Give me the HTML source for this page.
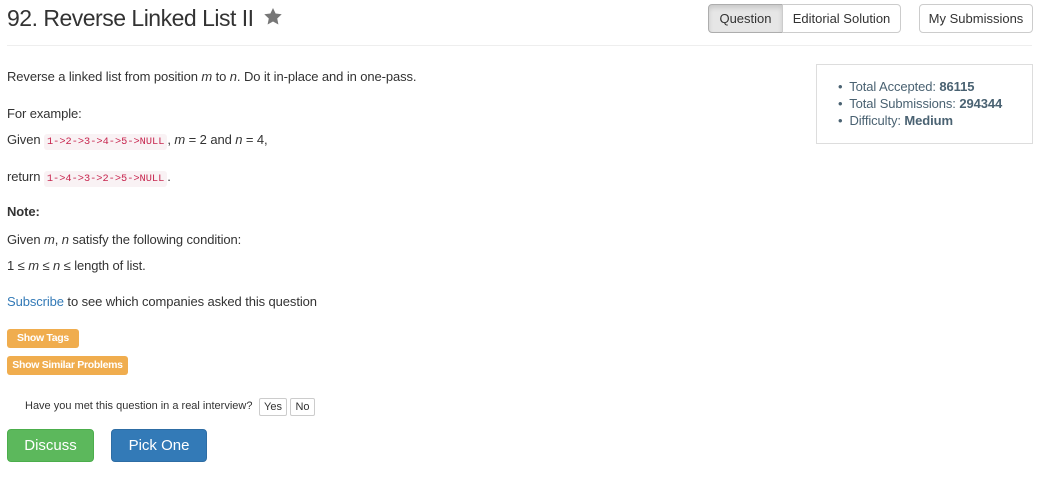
<!DOCTYPE html>
<html><head><meta charset="utf-8"><style>
body{margin:0;width:1057px;height:477px;background:#fff;font-family:"Liberation Sans",sans-serif;color:#333;position:relative;overflow:hidden}
.a{position:absolute;white-space:nowrap}
.t{font-size:13px;line-height:16px;letter-spacing:-0.1px}
code{font-family:"Liberation Mono",monospace;font-size:10.3px;letter-spacing:0;color:#c7254e;background:#f9f2f4;padding:2px 3px;border-radius:3px}
.btn{position:absolute;box-sizing:border-box;border:1px solid #ccc;border-radius:4px;background:#fff;font-size:13px;text-align:center;color:#333}
.or{position:absolute;background:#f0ad4e;color:#fff;font-weight:bold;font-size:10.5px;border-radius:3px;text-align:center;line-height:19px;letter-spacing:-0.3px}
</style></head><body>
<div class="a" style="left:7px;top:3px;font-size:23px;line-height:30px;letter-spacing:-0.5px;color:#333">92. Reverse Linked List II</div>
<svg class="a" style="left:264px;top:8px" width="18" height="17" viewBox="0 0 24 23"><path d="M12 0l3.5 7.5 8.3 1-6.1 5.7 1.6 8.2L12 18.3 4.7 22.4l1.6-8.2L.2 8.5l8.3-1z" fill="#777"/></svg>
<div class="btn" style="left:708px;top:4px;width:75px;height:29px;line-height:27px;background:#e6e6e6;border-color:#adadad;border-radius:4px 0 0 4px;box-shadow:inset 0 3px 5px rgba(0,0,0,.125)">Question</div>
<div class="btn" style="left:782px;top:4px;width:119px;height:29px;line-height:27px;border-radius:0 4px 4px 0">Editorial Solution</div>
<div class="btn" style="left:919px;top:4px;width:114px;height:29px;line-height:27px">My Submissions</div>
<div class="a" style="left:7px;top:45px;width:1025px;height:1px;background:#eee"></div>
<div class="a t" style="left:7px;top:69px">Reverse a linked list from position <i>m</i> to <i>n</i>. Do it in-place and in one-pass.</div>
<div class="a t" style="left:7px;top:106px">For example:</div>
<div class="a t" style="left:7px;top:132px">Given <code>1-&gt;2-&gt;3-&gt;4-&gt;5-&gt;NULL</code>, <i>m</i> = 2 and <i>n</i> = 4,</div>
<div class="a t" style="left:7px;top:169px">return <code>1-&gt;4-&gt;3-&gt;2-&gt;5-&gt;NULL</code>.</div>
<div class="a t" style="left:7px;top:204px;font-weight:bold">Note:</div>
<div class="a t" style="left:7px;top:232px">Given <i>m</i>, <i>n</i> satisfy the following condition:</div>
<div class="a t" style="left:7px;top:258px">1 ≤ <i>m</i> ≤ <i>n</i> ≤ length of list.</div>
<div class="a t" style="left:7px;top:294px"><span style="color:#337ab7">Subscribe</span> to see which companies asked this question</div>
<div class="a" style="left:816px;top:64px;width:215px;height:78px;border:1px solid #ddd"></div>
<div class="a t" style="left:838px;top:78px;color:#4a6272;line-height:17px">
<div>•&nbsp; Total Accepted: <b>86115</b></div>
<div>•&nbsp; Total Submissions: <b>294344</b></div>
<div>•&nbsp; Difficulty: <b>Medium</b></div></div>
<div class="or" style="left:7px;top:329px;width:72px;height:19px">Show Tags</div>
<div class="or" style="left:7px;top:356px;width:121px;height:19px">Show Similar Problems</div>
<div class="a" style="left:25px;top:400px;font-size:11px;line-height:13px">Have you met this question in a real interview?</div>
<div class="btn" style="left:259px;top:398px;width:28px;height:18px;line-height:16px;font-size:11px;border-radius:2px">Yes</div>
<div class="btn" style="left:290px;top:398px;width:25px;height:18px;line-height:16px;font-size:11px;border-radius:2px">No</div>
<div class="btn" style="left:7px;top:429px;width:87px;height:33px;line-height:31px;font-size:15px;background:#5cb85c;border-color:#4cae4c;color:#fff">Discuss</div>
<div class="btn" style="left:111px;top:429px;width:96px;height:33px;line-height:31px;font-size:15px;background:#337ab7;border-color:#2e6da4;color:#fff">Pick One</div>
</body></html>
